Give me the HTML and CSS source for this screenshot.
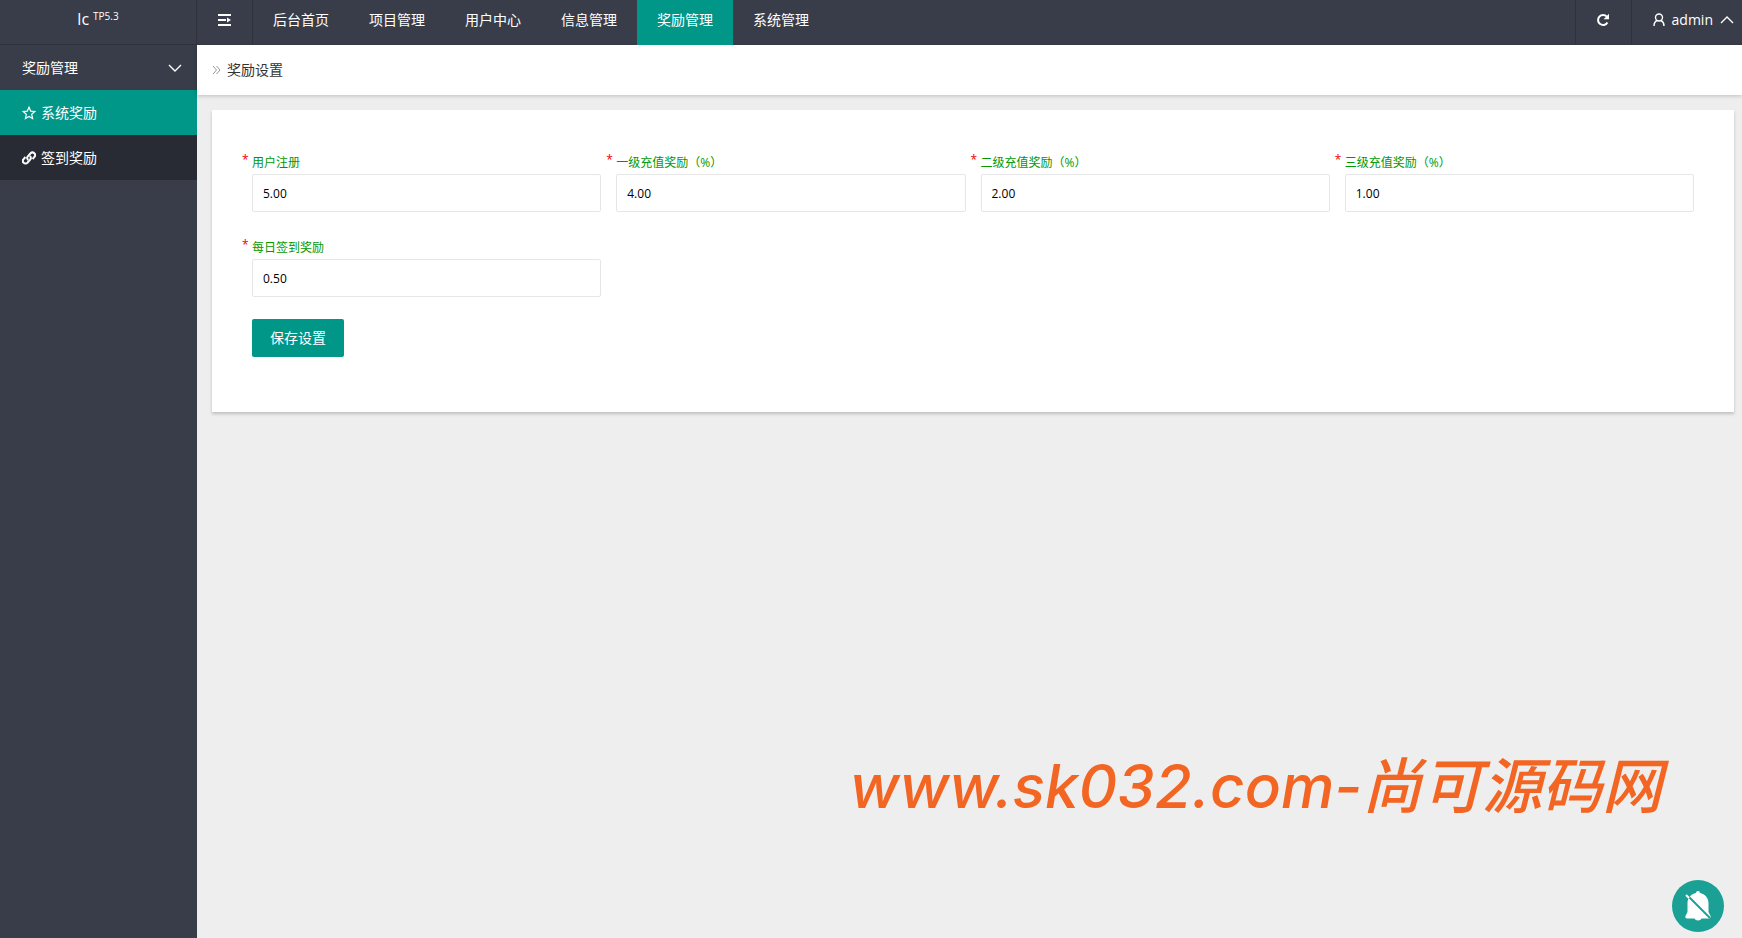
FILE: index.html
```html
<!doctype html>
<html lang="zh-CN">
<head>
	<meta charset="utf-8">
	<title>奖励设置</title>
	<link rel="stylesheet" href="styles.css">
</head>
<body>

	<div class="side">
		<a class="logo" href="#">lc <sup>TP5.3</sup></a>
		<a class="group" href="#">
			奖励管理
			<svg width="14" height="8" viewBox="0 0 14 8"><path d="M1 1l6 6 6-6"/></svg>
		</a>
		<a class="item this" href="#">
			<svg width="14" height="14" viewBox="0 0 14 14"><path d="M7 1.2l1.7 3.9 4.1.4-3.1 2.8.9 4.2L7 10.4l-3.6 2.1.9-4.2L1.2 5.5l4.1-.4z"/></svg>
			系统奖励
		</a>
		<a class="item" href="#">
			<svg class="link" width="14" height="14" viewBox="0 0 14 14"><path d="M6.200 9a2.700 2.700 0 0 1-.2-3.800l2.600-2.900a2.600 2.600 0 0 1 3.800 3.600L10.600 8M7.800 5a2.700 2.700 0 0 1 .2 3.800l-2.600 2.900a2.600 2.600 0 0 1-3.800-3.600L3.400 6"/></svg>
			签到奖励
		</a>
	</div>

	<div class="main">
		<div class="header">
			<button class="tool fold" title="折叠菜单">
				<svg width="14" height="12" viewBox="0 0 14 12"><path d="M0 1h13M0 6h8M0 11h13"/><path class="fill" d="M9 3.500v5L13 6z"/></svg>
			</button>
			<div class="nav">
				<a href="#">后台首页</a>
				<a href="#">项目管理</a>
				<a href="#">用户中心</a>
				<a href="#">信息管理</a>
				<a href="#" class="this">奖励管理</a>
				<a href="#">系统管理</a>
			</div>
			<button class="tool refresh" title="刷新">
				<svg width="14" height="14" viewBox="0 0 14 14"><path d="M11.400 9.500A5 5 0 1 1 10.800 3.700"/><path class="fill" d="M13 .8v5.400H7.600z"/></svg>
			</button>
			<a class="user" href="#">
				<svg width="12" height="14" viewBox="0 0 12 14"><circle cx="6" cy="4.500" r="3.500"/><path d="M4 7.500C2 8.500 1 10.500 1 13M8 7.500c2 1 3 3 3 5.500"/></svg>
				admin
				<svg width="14" height="8" viewBox="0 0 14 8"><path d="M1 7l6-6 6 6"/></svg>
			</a>
		</div>

		<div class="crumb">
			<svg width="9" height="10" viewBox="0 0 9 10"><path d="M1 1l3.500 4L1 9M4.500 1L8 5 4.500 9"/></svg>
			奖励设置
		</div>

		<form class="card">
			<div class="fields">
				<div class="field">
					<label for="reg">用户注册</label>
					<input type="text" id="reg" value="5.00">
				</div>
				<div class="field">
					<label for="level1">一级充值奖励（%）</label>
					<input type="text" id="level1" value="4.00">
				</div>
				<div class="field">
					<label for="level2">二级充值奖励（%）</label>
					<input type="text" id="level2" value="2.00">
				</div>
				<div class="field">
					<label for="level3">三级充值奖励（%）</label>
					<input type="text" id="level3" value="1.00">
				</div>
				<div class="field">
					<label for="sign">每日签到奖励</label>
					<input type="text" id="sign" value="0.50">
				</div>
			</div>
			<button type="button" class="save">保存设置</button>
		</form>
	</div>

	<div class="mark">www.sk032.com-<span>尚可源码网</span></div>

	<button class="bell" title="关闭提醒">
		<svg width="26" height="30" viewBox="0 0 26 30">
			<path d="M11 2a2 2 0 0 1 4 0c5 1 8.500 5 8.500 10v9l2 4c.5 1.500 0 2.500-1.500 2.500h-7.500c-1 2.500-6 2.500-7 0H2C.5 27.500 0 26.500.5 25l2-4v-9C2.500 7 6 3 11 2z"/>
			<path class="cut" d="M3 5l22 22"/>
			<path class="bar" d="M1 4l3 3"/>
		</svg>
	</button>

</body>
</html>
```
FILE: styles.css
```css
* {box-sizing: border-box;}
body {margin: 0; display: flex; min-height: 100vh; background: #eee; color: #333; font: 14px/20px "Open Sans", "Noto Sans CJK SC", sans-serif;}
a {color: inherit; text-decoration: none;}
button, input {margin: 0; font-family: inherit;}
button {border: 0; cursor: pointer;}
svg {flex: none; fill: none; stroke: currentColor; stroke-width: 1.4;}
svg .fill {fill: currentColor; stroke: none;}

/* left menu */
.side {flex: none; width: 197px; background: #393d49; color: #fff;}
.side a {display: flex; align-items: center; height: 45px; padding: 0 22px;}
.side .logo {justify-content: center; align-items: flex-start; gap: 4px; padding: 9px 22px; font-size: 16px; border-right: 1px solid #2f323c; border-bottom: 1px solid #2f323c;}
.logo sup {font-size: 10px; line-height: 14px;}
.side .group {justify-content: space-between; padding-right: 15px;}
.side .item {gap: 5px; background: #282b33;}
.side .this, .nav .this {background: #009688;}
.item svg {stroke-width: 1.2;}
.item .link {stroke-width: 2;}

/* top bar */
.main {flex: 1; min-width: 0;}
.header {display: flex; height: 45px; background: #393d49; color: #fff; line-height: 40px;}
.tool {display: flex; justify-content: center; width: 56px; padding: 13px 0 0; background: none; color: #fff; border-right: 1px solid #2f323c;}
.tool svg {stroke-width: 2;}
.fold svg {margin-top: 1px;}
.refresh {width: 57px; border-left: 1px solid #2f323c;}
.nav {display: flex; flex: 1;}
.nav a {padding: 0 20px;}
.user {display: flex; align-items: center; gap: 7px; height: 40px; padding: 0 8px 0 21px;}

.crumb {display: flex; align-items: center; gap: 6px; height: 50px; padding: 0 15px; background: #fff; box-shadow: 0 1px 4px rgba(0,0,0,.2);}
.crumb svg {color: #999; stroke-width: 1;}

/* form */
.card {margin: 15px 8px 15px 15px; padding: 40px 40px 55px; background: #fff; box-shadow: 0 2px 3px rgba(0,0,0,.2);}
.fields {display: grid; grid-template-columns: repeat(4, 1fr); gap: 23px 15px;}
.field label {position: relative; display: block; height: 24px; line-height: 26px; font-size: 12px; color: #090;}
.field label:before {content: "*"; position: absolute; left: -10px; top: -3px; color: #e00;}
.field input {display: block; width: 100%; height: 38px; padding: 0 10px; border: 1px solid #e6e6e6; border-radius: 2px; font-size: 12px; color: #000; outline: none;}
.save {display: block; height: 38px; margin-top: 22px; padding: 0 18px 2px; border-radius: 2px; background: #009688; color: #fff; font-size: 14px;}

/* floating */
.mark {position: fixed; right: 80px; bottom: 108px; font: italic 500 60px/88px Inter, "Noto Sans CJK SC", sans-serif; color: #f26522; white-space: nowrap;}
.bell {position: fixed; right: 18px; bottom: 6px; display: flex; align-items: center; justify-content: center; width: 52px; height: 52px; padding: 0; border-radius: 50%; background: #1aa094; color: #fff;}
.bell svg {fill: #fff; stroke: none;}
.bell .cut {stroke: #1aa094; stroke-width: 2;}
.bell .bar {stroke: #fff; stroke-width: 2;}
```
